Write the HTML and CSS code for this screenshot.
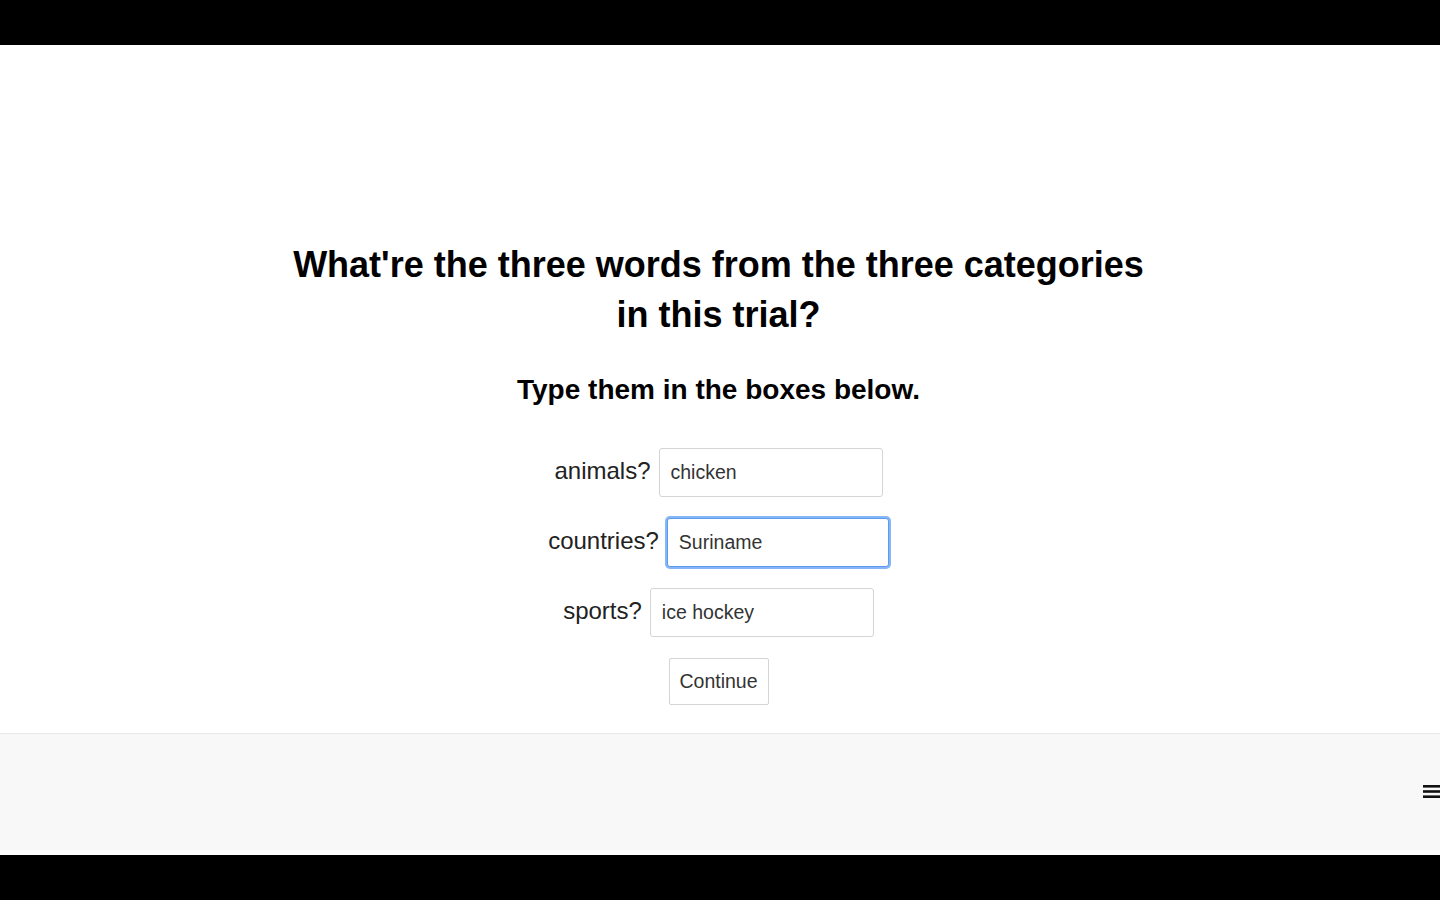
FILE: index.html
```html
<!DOCTYPE html>
<html lang="en">
<head>
<meta charset="utf-8">
<title>Recall</title>
<link rel="stylesheet" href="styles.css">
</head>
<body>
<div class="frame">
  <div class="bar-top"></div>
  <div class="screen">
    <main class="content">
      <h1 class="question">What're the three words from the three categories<br>in this trial?</h1>
      <h2 class="instruction">Type them in the boxes below.</h2>
      <form class="answers">
        <div class="row">
          <label class="label" for="a1">animals?</label>
          <input class="field" id="a1" type="text" value="chicken">
        </div>
        <div class="row">
          <label class="label" for="a2">countries?</label>
          <input class="field field-focus" id="a2" type="text" value="Suriname">
        </div>
        <div class="row">
          <label class="label" for="a3">sports?</label>
          <input class="field" id="a3" type="text" value="ice hockey">
        </div>
        <div class="row">
          <button class="btn" type="button">Continue</button>
        </div>
      </form>
    </main>
    <footer class="footer">
      <svg class="menu" width="24" height="14" viewBox="0 0 24 14" aria-hidden="true">
        <rect x="0" y="0" width="24" height="2.6" fill="#111"/>
        <rect x="0" y="5.2" width="24" height="2.6" fill="#111"/>
        <rect x="0" y="10.4" width="24" height="2.6" fill="#111"/>
      </svg>
    </footer>
    <div class="gap-strip"></div>
  </div>
  <div class="bar-bottom"></div>
</div>
</body>
</html>
```
FILE: styles.css
```css
html, body {
  margin: 0;
  padding: 0;
  background: #000;
}
.frame {
  width: 1440px;
  height: 900px;
  display: flex;
  flex-direction: column;
  overflow: hidden;
}
.bar-top {
  height: 45px;
  background: #000;
  flex: none;
}
.bar-bottom {
  flex: 1;
  background: #000;
}
.screen {
  background: #fff;
  display: flex;
  flex-direction: column;
  flex: none;
}
.content {
  height: 688px;
  box-sizing: border-box;
  padding-top: 195px;
  padding-right: 3px;
  font-family: "Liberation Sans", Arial, sans-serif;
  text-align: center;
  color: #000;
}
.question {
  margin: 0;
  font-size: 36px;
  line-height: 50px;
  font-weight: bold;
}
.instruction {
  margin: 32px 0 0;
  font-size: 28px;
  line-height: 36px;
  font-weight: bold;
}
.answers {
  margin-top: 40px;
  display: flex;
  flex-direction: column;
  align-items: center;
  gap: 21px;
}
.row {
  display: flex;
  align-items: center;
  justify-content: center;
  gap: 8px;
}
.label {
  font-size: 24px;
  color: #222;
  margin-top: -3px;
}
.field {
  width: 224px;
  height: 49px;
  box-sizing: border-box;
  border: 1px solid #d4d4d4;
  border-radius: 3px;
  padding: 0 11px;
  font-family: "Liberation Sans", Arial, sans-serif;
  font-size: 19.5px;
  color: #333;
  background: #fff;
  outline: none;
}
.field-focus {
  width: 222px;
  border: 1px solid #5b9bf0;
  box-shadow: 0 0 0 2px #86b6f6;
}
.btn {
  width: 100px;
  height: 47px;
  box-sizing: border-box;
  border: 1px solid #d4d4d4;
  border-radius: 2px;
  background: #fff;
  font-family: "Liberation Sans", Arial, sans-serif;
  font-size: 19.5px;
  color: #333;
  padding: 0;
}
.footer {
  height: 116px;
  background: #f8f8f8;
  border-top: 1px solid #e9e9e9;
  display: flex;
  align-items: center;
  justify-content: flex-end;
  overflow: hidden;
}
.menu {
  margin-right: -7px;
}
.gap-strip {
  height: 5px;
  background: #fff;
}
```
